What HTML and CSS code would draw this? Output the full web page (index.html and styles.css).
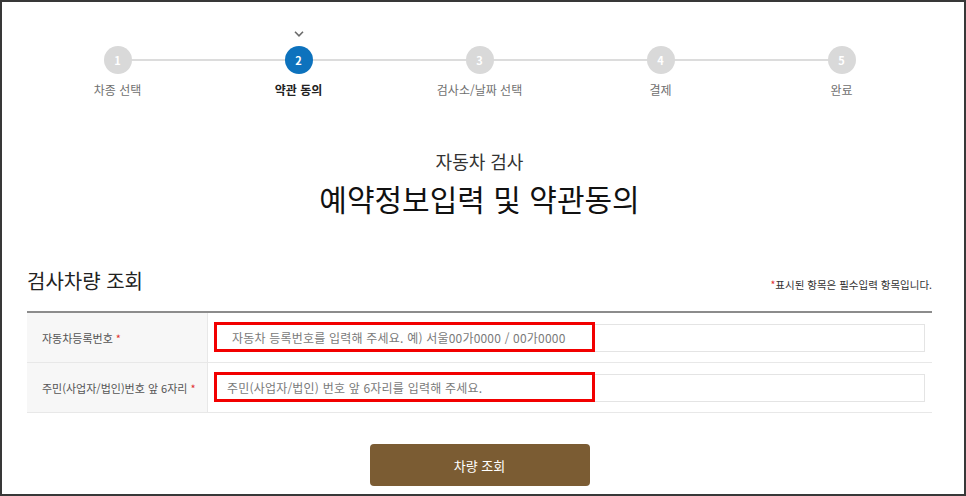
FILE: index.html
```html
<!DOCTYPE html>
<html lang="ko">
<head>
    <meta charset="UTF-8">
    <meta name="viewport" content="width=device-width, initial-scale=1.0">
    <title>자동차 검사 - 예약정보입력 및 약관동의</title>
    <link rel="stylesheet" href="styles.css">
</head>
<body>

    <div class="frame">

        <!-- Step indicator -->
        <ol class="steps">
            <li class="step">
                <span class="check"></span>
                <span class="num">1</span>
                <span class="label">차종 선택</span>
            </li>
            <li class="step active">
                <span class="check">
                    <svg width="10" height="6" viewBox="0 0 10 6"><path d="M1 0.8 L5 4.8 L9 0.8" fill="none" stroke="#6b6b6b" stroke-width="1.6"/></svg>
                </span>
                <span class="num">2</span>
                <span class="label">약관 동의</span>
            </li>
            <li class="step">
                <span class="check"></span>
                <span class="num">3</span>
                <span class="label">검사소/날짜 선택</span>
            </li>
            <li class="step">
                <span class="check"></span>
                <span class="num">4</span>
                <span class="label">결제</span>
            </li>
            <li class="step">
                <span class="check"></span>
                <span class="num">5</span>
                <span class="label">완료</span>
            </li>
        </ol>

        <div class="page-title">
            <p class="sub">자동차 검사</p>
            <h1>예약정보입력 및 약관동의</h1>
        </div>

        <div class="section-head">
            <h2>검사차량 조회</h2>
            <p class="note"><span class="req">*</span>표시된 항목은 필수입력 항목입니다.</p>
        </div>

        <div class="form-table">
            <div class="row">
                <div class="th">자동차등록번호 <span class="req">*</span></div>
                <div class="td">
                    <input type="text" class="field" placeholder="자동차 등록번호를 입력해 주세요. 예) 서울00가0000 / 00가0000">
                    <span class="mark"></span>
                </div>
            </div>
            <div class="row">
                <div class="th">주민(사업자/법인)번호 앞 6자리 <span class="req">*</span></div>
                <div class="td">
                    <input type="text" class="field short" placeholder="주민(사업자/법인) 번호 앞 6자리를 입력해 주세요.">
                    <span class="mark"></span>
                </div>
            </div>
        </div>

        <div class="actions">
            <button class="search-btn">차량 조회</button>
        </div>

    </div>

</body>
</html>
```

FILE: styles.css
```css
/* Global Styles */
body {
    margin: 0;
    font-family: 'Noto Sans CJK KR', 'Noto Sans', sans-serif;
    color: #333;
    background-color: #fff;
}

.frame {
    width: 966px;
    height: 496px;
    box-sizing: border-box;
    border: 2px solid #383838;
    padding: 0 32px 0 25px;
    overflow: hidden;
}

/* Steps */
.steps {
    position: relative;
    display: flex;
    list-style: none;
    margin: 0;
    padding: 29px 0 0;
}

.steps::before {
    content: "";
    position: absolute;
    top: 57px;
    left: 90px;
    right: 90px;
    height: 2px;
    background-color: #dcdcdc;
}

.step {
    flex: 1;
    display: flex;
    flex-direction: column;
    align-items: center;
    position: relative;
}

.check {
    height: 6px;
    margin-bottom: 9px;
}

.check svg {
    display: block;
}

.num {
    width: 28px;
    height: 28px;
    border-radius: 50%;
    background-color: #d9d9d9;
    color: #fff;
    font-size: 11px;
    font-weight: bold;
    line-height: 28px;
    text-align: center;
}

.label {
    margin-top: 8px;
    font-size: 12px;
    line-height: 16px;
    color: #707070;
}

.step.active .num {
    background-color: #0d72bd;
}

.step.active .label {
    color: #222;
    font-weight: bold;
}

/* Title */
.page-title {
    text-align: center;
    margin-top: 51px;
}

.page-title .sub {
    margin: 0;
    font-size: 18px;
    line-height: 24px;
    color: #333;
}

.page-title h1 {
    margin: 5px 0 0;
    font-size: 30px;
    line-height: 40px;
    font-weight: normal;
    color: #111;
}

/* Section */
.section-head {
    display: flex;
    justify-content: space-between;
    align-items: baseline;
    margin-top: 49px;
}

.section-head h2 {
    margin: 0;
    font-size: 20px;
    line-height: 28px;
    font-weight: normal;
    color: #222;
}

.note {
    margin: 0;
    font-size: 10.5px;
    color: #333;
}

.req {
    color: #e03030;
}

.form-table {
    margin-top: 16px;
    border-top: 2px solid #8c8c8c;
}

.row {
    display: flex;
    height: 50px;
    box-sizing: border-box;
    border-bottom: 1px solid #e8e8e8;
}

.th {
    width: 165px;
    padding-left: 15px;
    background-color: #f7f7f7;
    border-right: 1px solid #e8e8e8;
    display: flex;
    align-items: center;
    font-size: 11px;
    color: #555;
}

.th .req {
    margin-left: 3px;
}

.td {
    flex: 1;
    position: relative;
    display: flex;
    align-items: center;
    padding: 0 7px;
}

.field {
    width: 100%;
    height: 28px;
    box-sizing: border-box;
    border: 1px solid #e4e4e4;
    padding: 0 0 0 16px;
    font-family: inherit;
    font-size: 12px;
    letter-spacing: 0.2px;
    color: #333;
    outline: none;
}

.field.short {
    padding-left: 11px;
}

.field::placeholder {
    color: #7a7a7a;
}

/* red highlight drawn over the field */
.mark {
    position: absolute;
    left: 6px;
    top: 9px;
    width: 381px;
    height: 30px;
    box-sizing: border-box;
    border: 3px solid #f20000;
    pointer-events: none;
}

.actions {
    display: flex;
    justify-content: center;
    margin-top: 31px;
}

.search-btn {
    width: 220px;
    height: 42px;
    border: none;
    border-radius: 4px;
    background-color: #7b5c33;
    color: #fff;
    font-family: inherit;
    font-size: 13px;
    cursor: pointer;
}

.search-btn:hover {
    background-color: #6a4e2a;
}
```
